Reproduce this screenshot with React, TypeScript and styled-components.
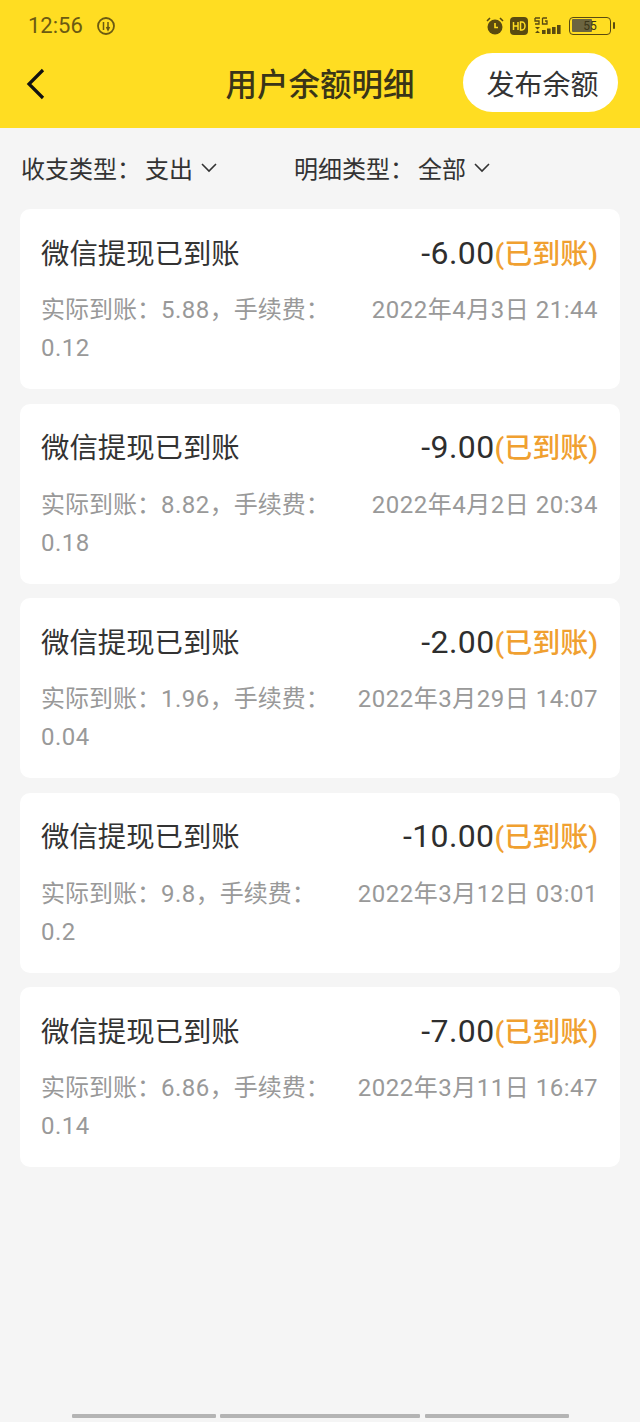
import React from "react";
import styled, { createGlobalStyle } from "styled-components";

const Global = createGlobalStyle`
  html, body { margin: 0; padding: 0; background: #f5f5f5; }
  body { font-family: Roboto, "Noto Sans CJK SC", sans-serif; }
  * { box-sizing: border-box; }
`;
const Page = styled.div`
  width: 640px; height: 1422px; background: #f5f5f5; display: flex; flex-direction: column; overflow: hidden;
`;
const Header = styled.header`
  height: 128px; background: #ffdd22; display: flex; flex-direction: column;
`;
const StatusBar = styled.div`
  height: 52px; padding: 0 22px 0 28px; display: flex; align-items: center; justify-content: space-between; color: #6b5a12;
`;
const Cluster = styled.div<{ $gap: number }>`
  display: flex; align-items: center; gap: ${(p) => p.$gap}px;
`;
const Time = styled.span`
  font-size: 22px;
`;
const NavBar = styled.div`
  flex: 1; display: grid; grid-template-columns: 1fr auto 1fr; align-items: center; padding: 0 22px 16px 22px;
`;
const BackWrap = styled.div`
  display: flex; margin: 4px 0 0 4px;
`;
const Title = styled.h1`
  margin: 8px 0 0; font-size: 31.5px; font-weight: 500; color: #3a3518; line-height: 44px; white-space: nowrap;
`;
const PublishButton = styled.button`
  justify-self: end; width: 155px; height: 59px; margin-top: 2px; border: 0; border-radius: 30px; background: #fff; color: #333;
  font: 400 28px Roboto, "Noto Sans CJK SC", sans-serif; padding: 0 0 0 4px;
`;
const Filters = styled.div`
  height: 81px; padding: 0 0 2px 21px; display: flex; align-items: center; gap: 77px; color: #333; font-size: 24px;
`;
const Filter = styled.div`
  display: flex; align-items: center; gap: 8px; white-space: nowrap;
`;
const FilterValue = styled.span`
  margin-left: 4px;
`;
const List = styled.div`
  display: flex; flex-direction: column; gap: 14.6px; padding: 0 20px;
`;
const Card = styled.article`
  height: 180px; background: #fff; border-radius: 10px; padding: 21px 22px 0 21px; display: flex; flex-direction: column;
`;
const TopRow = styled.div`
  display: flex; justify-content: space-between; align-items: center; height: 42px;
`;
const CardTitle = styled.div`
  font-size: 28.4px; color: #333; white-space: nowrap;
`;
const Amount = styled.div`
  font-size: 32px; font-weight: 400; letter-spacing: 0.4px; color: #2e2e2e; white-space: nowrap; padding-top: 1px;
`;
const Status = styled.span`
  font-size: 28px; font-weight: 500; letter-spacing: 0; color: #f0a030;
`;
const BottomRow = styled.div`
  display: flex; justify-content: space-between; margin-top: 19px; color: #999; font-size: 24px; line-height: 38px;
`;
const Detail = styled.div`
  display: flex; flex-direction: column; white-space: nowrap;
`;
const DetailValue = styled.span`
  letter-spacing: 0.5px;
`;
const DateText = styled.div`
  white-space: nowrap; letter-spacing: 0.5px;
`;
const Spacer = styled.div`
  flex: 1;
`;
const NavHint = styled.div`
  display: flex; justify-content: center; gap: 4.5px; height: 6px; margin-bottom: 2px;
`;
const HintBar = styled.div<{ $w: number }>`
  width: ${(p) => p.$w}px; height: 4px; background: #b4b4b4; border-radius: 1px;
`;

const Chevron = () => (
  <svg width="16" height="10" viewBox="0 0 16 10" fill="none" stroke="#333" strokeWidth="1.6"><path d="M1 1l7 7 7-7" /></svg>
);
const Back = () => (
  <svg width="20" height="32" viewBox="0 0 20 32" fill="none" stroke="#111" strokeWidth="3.2"><path d="M17 2L3 16l14 14" /></svg>
);
const NetSpeed = () => (
  <svg width="20" height="20" viewBox="0 0 20 20" fill="none" stroke="#6b5a12" strokeWidth="1.8">
    <circle cx="10" cy="10" r="8" />
    <path d="M7.5 6v8M12 6v8M10.5 11l1.5 3 1.5-3" strokeWidth="1.5" />
  </svg>
);
const Alarm = () => (
  <svg width="18" height="18" viewBox="0 0 18 18">
    <circle cx="9" cy="10" r="7.5" fill="#5a4a10" />
    <path d="M1 4l3-3M17 4l-3-3" stroke="#5a4a10" strokeWidth="1.6" />
    <path d="M9 6v4.500h3" stroke="#ffdd22" strokeWidth="1.600" fill="none" />
  </svg>
);
const HdBadge = () => (
  <svg width="18" height="18" viewBox="0 0 18 18">
    <rect width="18" height="18" rx="4" fill="#5a4a10" />
    <path d="M3.500 5v8M8 5v8M3.500 9H8M10.500 5v8h1.500a3 4 0 0 0 0-8z" stroke="#ffdd22" strokeWidth="1.500" fill="none" />
  </svg>
);
const Signal = () => (
  <svg width="29" height="20" viewBox="0 0 29 20">
    <path d="M1 2h5M1 2v3h4v3H1M8.500 2H13M8.500 2v6H13V5h-2" stroke="#5a4a10" strokeWidth="1.300" fill="none" />
    <path d="M1 11h5l-2.500 2.500z M1 17l2.500-2.500L6 17z" fill="#5a4a10" />
    <rect x="8" y="14" width="3.600" height="4" fill="#5a4a10" />
    <rect x="13" y="12.500" width="3.600" height="5.500" fill="#5a4a10" />
    <rect x="18" y="11" width="3.600" height="7" fill="#5a4a10" />
    <rect x="23" y="9" width="3.600" height="9" fill="#5a4a10" />
  </svg>
);
const BatteryIcon = styled.div`
  position: relative; width: 42px; height: 18px; border: 1.5px solid #5a4a10; border-radius: 4px; padding: 1.5px;
  display: flex; align-items: center; margin-right: 7px;
  &::after { content: ""; position: absolute; right: -5px; top: 4px; width: 2px; height: 7px; background: #5a4a10; border-radius: 1px; }
`;
const BatteryFill = styled.div`
  width: 55%; height: 100%; background: #6b6440; border-radius: 1px;
`;
const BatteryLabel = styled.span`
  position: absolute; left: 0; right: 0; top: 0; bottom: 0; display: flex; align-items: center; justify-content: center; font-size: 12px; color: #3a3518;
`;

const rows = [
  { amount: "-6.00", actual: "5.88", fee: "0.12", date: "2022年4月3日 21:44" },
  { amount: "-9.00", actual: "8.82", fee: "0.18", date: "2022年4月2日 20:34" },
  { amount: "-2.00", actual: "1.96", fee: "0.04", date: "2022年3月29日 14:07" },
  { amount: "-10.00", actual: "9.8", fee: "0.2", date: "2022年3月12日 03:01" },
  { amount: "-7.00", actual: "6.86", fee: "0.14", date: "2022年3月11日 16:47" },
];

export default function App() {
  return (
    <Page>
      <Global />
      <Header>
        <StatusBar>
          <Cluster $gap={13}>
            <Time>12:56</Time>
            <NetSpeed />
          </Cluster>
          <Cluster $gap={6}>
            <Alarm />
            <HdBadge />
            <Signal />
            <BatteryIcon>
              <BatteryFill />
              <BatteryLabel>55</BatteryLabel>
            </BatteryIcon>
          </Cluster>
        </StatusBar>
        <NavBar>
          <BackWrap>
            <Back />
          </BackWrap>
          <Title>用户余额明细</Title>
          <PublishButton>发布余额</PublishButton>
        </NavBar>
      </Header>
      <Filters>
        <Filter>
          <span>
            收支类型：<FilterValue>支出</FilterValue>
          </span>
          <Chevron />
        </Filter>
        <Filter>
          <span>
            明细类型：<FilterValue>全部</FilterValue>
          </span>
          <Chevron />
        </Filter>
      </Filters>
      <List>
        {rows.map((r) => (
          <Card key={r.date}>
            <TopRow>
              <CardTitle>微信提现已到账</CardTitle>
              <Amount>
                {r.amount}
                <Status>(已到账)</Status>
              </Amount>
            </TopRow>
            <BottomRow>
              <Detail>
                <span>
                  实际到账：<DetailValue>{r.actual}</DetailValue>，手续费：
                </span>
                <DetailValue>{r.fee}</DetailValue>
              </Detail>
              <DateText>{r.date}</DateText>
            </BottomRow>
          </Card>
        ))}
      </List>
      <Spacer />
      <NavHint>
        <HintBar $w={144} />
        <HintBar $w={200} />
        <HintBar $w={144} />
      </NavHint>
    </Page>
  );
}
